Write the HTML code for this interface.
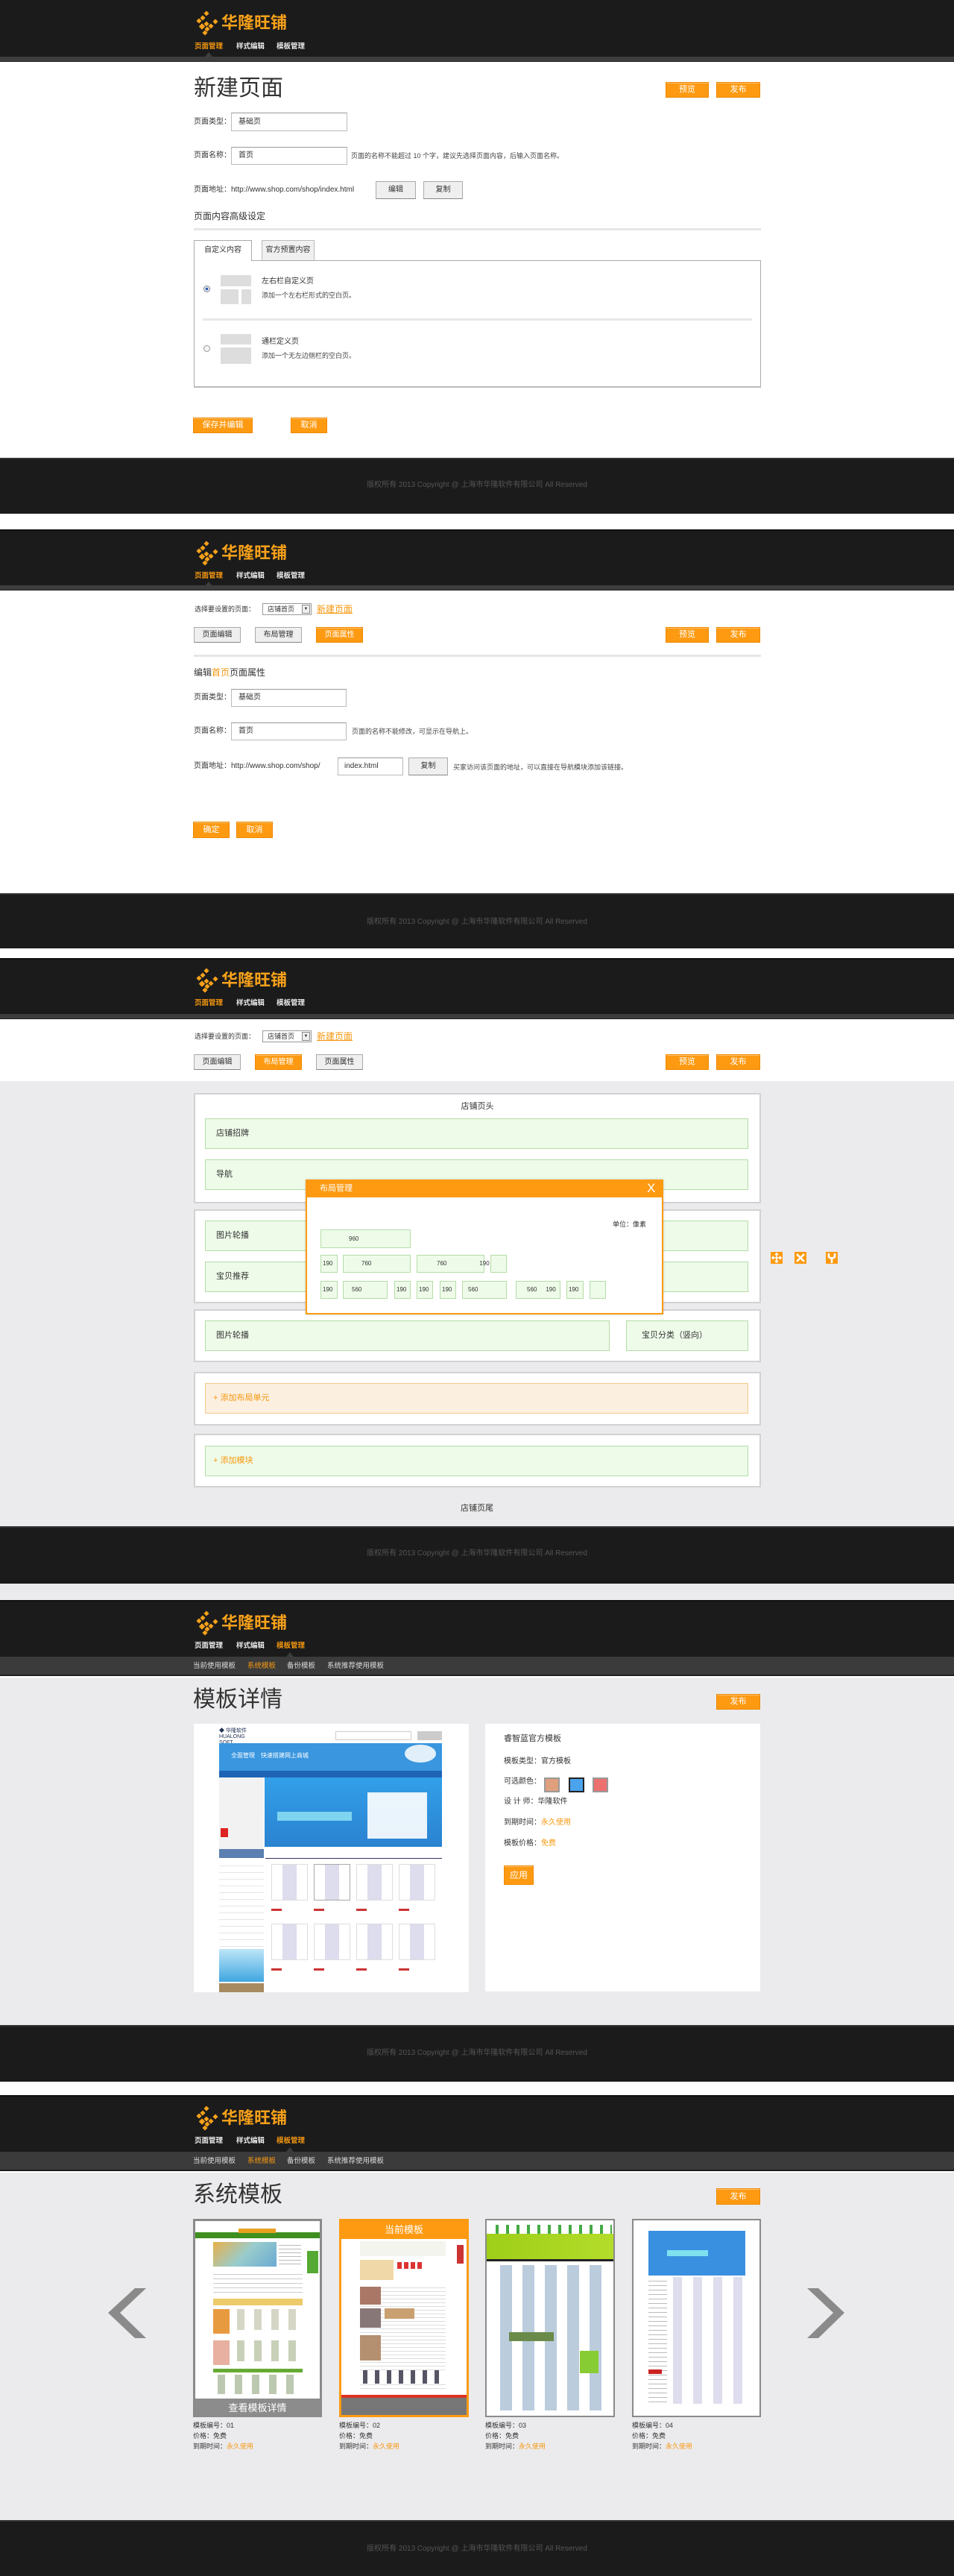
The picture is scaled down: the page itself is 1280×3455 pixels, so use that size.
<!DOCTYPE html>
<html><head><meta charset="utf-8">
<style>
*{margin:0;padding:0;box-sizing:border-box}
body{width:1280px;height:3455px;position:relative;background:#fff;font-family:"Liberation Sans","Noto Sans CJK SC",sans-serif;overflow:hidden;color:#333}
.a{position:absolute}
.hd{position:absolute;left:0;width:1280px;height:76px;background:#1b1b1b}
.band{position:absolute;left:0;width:1280px;height:7px;background:#3d3d3d;border-bottom:1px solid #222}
.sub{position:absolute;left:0;width:1280px;height:26px;background:#3b3b3b;border-bottom:2px solid #1e1e1e}
.ft{position:absolute;left:0;width:1280px;background:#1b1b1b;border-top:2px solid #333}
.cr{position:absolute;left:0;width:1280px;text-align:center;font-size:10px;color:#555;line-height:14px}
.lt{position:absolute;font-size:22px;line-height:24px;color:#f7a11a;font-weight:bold}
.nv{position:absolute;font-size:9.5px;line-height:14px;color:#eee;font-weight:bold;white-space:nowrap}
.sn{position:absolute;font-size:9.5px;line-height:14px;color:#ddd;white-space:nowrap}
.o{color:#f7980f!important}
.L{position:absolute;font-size:10px;line-height:14px;color:#333;white-space:nowrap}
.h{position:absolute;font-size:9px;line-height:14px;color:#444;white-space:nowrap}
.ob{position:absolute;background:#fd9a12;border:1px solid #f08800;color:#fff;font-size:11px;text-align:center;box-shadow:0 1px 0 #ffc070 inset}
.gb{position:absolute;background:#efefef;border:1px solid #aaa;border-bottom-color:#888;color:#333;font-size:10px;text-align:center}
.in{position:absolute;background:#fff;border:1px solid #bbb;border-top-color:#999;font-size:10px;color:#333;padding-left:9px}
.tri{position:absolute;width:0;height:0;border-left:5px solid transparent;border-right:5px solid transparent;border-bottom:6px solid #3d3d3d}
.gbox{position:absolute;background:#fff;border:2px solid #d2d2d2}
.gr{position:absolute;background:#eefbe9;border:1px solid #b5dca7;font-size:11px;color:#333;padding-left:14px}
.mb{position:absolute;background:#eefbe9;border:1px solid #b5dca7;font-size:8px;color:#333}
.gray{position:absolute;left:0;width:1280px;background:#ebebed}
.lg{position:absolute;width:40px;height:36px}
</style></head><body>
<svg width="0" height="0" style="position:absolute"><defs><symbol id="lg" viewBox="0 0 40 36"><g fill="#f7a11a"><rect x="16.5" y="3.5" width="5" height="5" transform="rotate(45 19 6)"/><rect x="11.5" y="9.5" width="5" height="5" transform="rotate(45 14 12)"/><rect x="6.5" y="13.5" width="5" height="5" transform="rotate(45 9 16)"/><rect x="10" y="20.5" width="6" height="6" transform="rotate(45 13 23.5)"/><rect x="16.5" y="17.5" width="5" height="5" transform="rotate(45 19 20)"/><rect x="22.5" y="20.5" width="5" height="5" transform="rotate(45 25 23)"/><rect x="28.5" y="14.5" width="5" height="5" transform="rotate(45 31 17)"/><rect x="17.5" y="24.5" width="5" height="5" transform="rotate(45 20 27)"/><rect x="14.5" y="29.5" width="5" height="5" transform="rotate(45 17 32)"/></g></symbol></defs></svg>

<!-- ===== Section 1 ===== -->
<div class="hd" style="top:0"></div><div class="band" style="top:76px"></div>
<svg class="lg" style="left:258px;top:12px"><use href="#lg"/></svg>
<div class="lt" style="left:297px;top:19px">华隆旺铺</div>
<div class="nv o" style="left:261px;top:56px">页面管理</div><div class="nv" style="left:317px;top:56px">样式编辑</div><div class="nv" style="left:371px;top:56px">模板管理</div>
<div class="tri" style="left:275px;top:70px"></div>

<div class="a" style="left:260px;top:103px;font-size:30px;line-height:32px;color:#333">新建页面</div>
<div class="ob" style="left:893px;top:110px;width:58px;height:21px;line-height:19px">预览</div>
<div class="ob" style="left:961px;top:110px;width:59px;height:21px;line-height:19px">发布</div>

<div class="L" style="left:260px;top:157px">页面类型：</div>
<div class="in" style="left:310px;top:151px;width:156px;height:25px;line-height:23px">基础页</div>
<div class="L" style="left:260px;top:202px">页面名称：</div>
<div class="in" style="left:310px;top:197px;width:156px;height:24px;line-height:22px">首页</div>
<div class="h" style="left:471px;top:202px">页面的名称不能超过 10 个字，建议先选择页面内容，后输入页面名称。</div>
<div class="L" style="left:260px;top:248px">页面地址：http://www.shop.com/shop/index.html</div>
<div class="gb" style="left:504px;top:243px;width:54px;height:24px;line-height:22px">编辑</div>
<div class="gb" style="left:568px;top:243px;width:53px;height:24px;line-height:22px">复制</div>
<div class="a" style="left:260px;top:283px;font-size:12px;line-height:14px">页面内容高级设定</div>
<div class="a" style="left:260px;top:306px;width:761px;height:3px;background:#e6e6e8"></div>
<div class="a" style="left:260px;top:349px;width:761px;height:171px;border:1px solid #aaa;border-bottom:2px solid #bbb"></div>
<div class="a" style="left:260px;top:322px;width:78px;height:28px;background:#fff;border:1px solid #aaa;border-bottom:none;font-size:10px;line-height:26px;text-align:center">自定义内容</div>
<div class="a" style="left:351px;top:322px;width:71px;height:27px;background:#f0f0f0;border:1px solid #bbb;border-bottom:none;font-size:10px;line-height:26px;text-align:center">官方预置内容</div>
<div class="a" style="left:273px;top:383px;width:9px;height:9px;border-radius:50%;border:1px solid #778;background:radial-gradient(#2a5db0 35%,#fff 45%)"></div>
<div class="a" style="left:296px;top:369px;width:41px;height:15px;background:#ddd"></div>
<div class="a" style="left:296px;top:388px;width:24px;height:20px;background:#ddd"></div>
<div class="a" style="left:324px;top:388px;width:13px;height:20px;background:#ddd"></div>
<div class="L" style="left:351px;top:371px">左右栏自定义页</div>
<div class="h" style="left:351px;top:389px">添加一个左右栏形式的空白页。</div>
<div class="a" style="left:272px;top:427px;width:737px;height:3px;background:#e8e8ea"></div>
<div class="a" style="left:273px;top:463px;width:9px;height:9px;border-radius:50%;border:1px solid #999;background:#f4f4f4"></div>
<div class="a" style="left:296px;top:448px;width:41px;height:14px;background:#ddd"></div>
<div class="a" style="left:296px;top:466px;width:41px;height:22px;background:#ddd"></div>
<div class="L" style="left:351px;top:452px">通栏定义页</div>
<div class="h" style="left:351px;top:470px">添加一个无左边侧栏的空白页。</div>
<div class="ob" style="left:259px;top:560px;width:80px;height:21px;line-height:19px">保存并编辑</div>
<div class="ob" style="left:390px;top:560px;width:49px;height:21px;line-height:19px">取消</div>

<div class="ft" style="top:614px;height:75px"></div>
<div class="cr" style="top:644px">版权所有 2013 Copyright @ 上海市华隆软件有限公司 All  Reserved</div>

<!-- ===== Section 2 ===== -->
<div class="hd" style="top:710px;border-top:2px solid #111"></div><div class="band" style="top:785px"></div>
<svg class="lg" style="left:258px;top:723px"><use href="#lg"/></svg>
<div class="lt" style="left:297px;top:730px">华隆旺铺</div>
<div class="nv o" style="left:261px;top:766px">页面管理</div><div class="nv" style="left:317px;top:766px">样式编辑</div><div class="nv" style="left:371px;top:766px">模板管理</div>
<div class="tri" style="left:275px;top:780px"></div>

<div class="h" style="left:261px;top:810px;color:#333">选择要设置的页面：</div>
<div class="a" style="left:352px;top:809px;width:66px;height:16px;border:1px solid #999;background:#fff;font-size:9px;line-height:14px;padding-left:6px">店铺首页<span style="position:absolute;right:1px;top:1px;width:11px;height:12px;border:1px solid #888;background:#eee;font-size:6px;line-height:10px;text-align:center">▼</span></div>
<div class="a o" style="left:425px;top:809px;font-size:12px;line-height:16px;text-decoration:underline">新建页面</div>
<div class="gb" style="left:260px;top:841px;width:63px;height:21px;line-height:19px">页面编辑</div>
<div class="gb" style="left:342px;top:841px;width:63px;height:21px;line-height:19px">布局管理</div>
<div class="ob" style="left:424px;top:841px;width:63px;height:21px;line-height:19px;font-size:10px">页面属性</div>
<div class="ob" style="left:893px;top:841px;width:58px;height:21px;line-height:19px">预览</div>
<div class="ob" style="left:961px;top:841px;width:59px;height:21px;line-height:19px">发布</div>
<div class="a" style="left:260px;top:878px;width:761px;height:3px;background:#e6e6e8"></div>
<div class="a" style="left:260px;top:895px;font-size:12px;line-height:14px">编辑<span class="o">首页</span>页面属性</div>
<div class="L" style="left:260px;top:929px">页面类型：</div>
<div class="in" style="left:310px;top:924px;width:155px;height:24px;line-height:22px">基础页</div>
<div class="L" style="left:260px;top:974px">页面名称：</div>
<div class="in" style="left:310px;top:969px;width:155px;height:24px;line-height:22px">首页</div>
<div class="h" style="left:472px;top:974px">页面的名称不能修改，可显示在导航上。</div>
<div class="L" style="left:260px;top:1021px">页面地址：http://www.shop.com/shop/</div>
<div class="in" style="left:453px;top:1016px;width:88px;height:24px;line-height:22px;padding-left:8px">index.html</div>
<div class="gb" style="left:548px;top:1016px;width:53px;height:24px;line-height:22px">复制</div>
<div class="h" style="left:608px;top:1022px">买家访问该页面的地址，可以直接在导航模块添加该链接。</div>
<div class="ob" style="left:259px;top:1102px;width:49px;height:22px;line-height:20px">确定</div>
<div class="ob" style="left:317px;top:1102px;width:49px;height:22px;line-height:20px">取消</div>

<div class="ft" style="top:1198px;height:74px"></div>
<div class="cr" style="top:1230px">版权所有 2013 Copyright @ 上海市华隆软件有限公司 All  Reserved</div>

<!-- ===== Section 3 ===== -->
<div class="hd" style="top:1285px;height:75px;border-top:2px solid #111"></div><div class="band" style="top:1360px"></div>
<svg class="lg" style="left:258px;top:1296px"><use href="#lg"/></svg>
<div class="lt" style="left:297px;top:1303px">华隆旺铺</div>
<div class="nv o" style="left:261px;top:1339px">页面管理</div><div class="nv" style="left:317px;top:1339px">样式编辑</div><div class="nv" style="left:371px;top:1339px">模板管理</div>

<div class="h" style="left:261px;top:1383px;color:#333">选择要设置的页面：</div>
<div class="a" style="left:352px;top:1382px;width:66px;height:16px;border:1px solid #999;background:#fff;font-size:9px;line-height:14px;padding-left:6px">店铺首页<span style="position:absolute;right:1px;top:1px;width:11px;height:12px;border:1px solid #888;background:#eee;font-size:6px;line-height:10px;text-align:center">▼</span></div>
<div class="a o" style="left:425px;top:1382px;font-size:12px;line-height:16px;text-decoration:underline">新建页面</div>
<div class="gb" style="left:260px;top:1414px;width:63px;height:21px;line-height:19px">页面编辑</div>
<div class="ob" style="left:342px;top:1414px;width:63px;height:21px;line-height:19px;font-size:10px">布局管理</div>
<div class="gb" style="left:424px;top:1414px;width:63px;height:21px;line-height:19px">页面属性</div>
<div class="ob" style="left:893px;top:1414px;width:58px;height:21px;line-height:19px">预览</div>
<div class="ob" style="left:961px;top:1414px;width:59px;height:21px;line-height:19px">发布</div>

<div class="gray" style="top:1450px;height:597px"></div>
<div class="gbox" style="left:260px;top:1466px;width:761px;height:148px"></div>
<div class="a" style="left:260px;top:1477px;width:761px;text-align:center;font-size:11px;line-height:14px">店铺页头</div>
<div class="gr" style="left:275px;top:1500px;width:729px;height:41px;line-height:39px">店铺招牌</div>
<div class="gr" style="left:275px;top:1555px;width:729px;height:41px;line-height:39px">导航</div>
<div class="gbox" style="left:260px;top:1622px;width:761px;height:126px"></div>
<div class="gr" style="left:275px;top:1637px;width:729px;height:41px;line-height:39px">图片轮播</div>
<div class="gr" style="left:275px;top:1692px;width:729px;height:41px;line-height:39px">宝贝推荐</div>
<div class="gbox" style="left:260px;top:1756px;width:761px;height:71px"></div>
<div class="gr" style="left:275px;top:1771px;width:543px;height:41px;line-height:39px">图片轮播</div>
<div class="gr" style="left:840px;top:1771px;width:164px;height:41px;line-height:39px;padding-left:20px">宝贝分类（竖向）</div>
<div class="gbox" style="left:260px;top:1840px;width:761px;height:72px"></div>
<div class="gr" style="left:275px;top:1855px;width:729px;height:41px;line-height:39px;background:#fbefdf;border-color:#f5c98a;color:#f7980f;padding-left:10px">+ 添加布局单元</div>
<div class="gbox" style="left:260px;top:1923px;width:761px;height:72px"></div>
<div class="gr" style="left:275px;top:1939px;width:729px;height:41px;line-height:39px;color:#f7980f;padding-left:10px">+ 添加模块</div>
<div class="a" style="left:560px;top:2016px;width:160px;text-align:center;font-size:11px;line-height:14px">店铺页尾</div>

<svg class="a" style="left:1034px;top:1679px" width="90" height="17" viewBox="0 0 90 17">
<rect x="0" y="0" width="16" height="16" fill="#fd9a12"/><path d="M8 2V14M2 8H14M6 4L8 2L10 4M6 12L8 14L10 12M4 6L2 8L4 10M12 6L14 8L12 10" stroke="#fff" stroke-width="1.6" fill="none"/>
<rect x="32" y="0" width="16" height="16" fill="#fd9a12"/><path d="M35 3L45 13M45 3L35 13" stroke="#fff" stroke-width="2.6"/>
<rect x="74" y="0" width="16" height="16" fill="#fd9a12"/><path d="M78 2V7Q82 10 86 7V2M82 8V15" stroke="#fff" stroke-width="2.6" fill="none"/>
</svg>

<!-- modal -->
<div class="a" style="left:410px;top:1582px;width:480px;height:181px;background:#fff;border:2px solid #fd9a12;box-shadow:0 0 3px rgba(0,0,0,.2)"></div>
<div class="a" style="left:410px;top:1582px;width:480px;height:24px;background:#fd9a12"></div>
<div class="a" style="left:429px;top:1587px;color:#fff;font-size:11px;line-height:14px">布局管理</div>
<div class="a" style="left:868px;top:1584px;color:#fff;font-size:17px;line-height:20px">X</div>
<div class="h" style="left:822px;top:1635px;color:#333">单位：像素</div>
<div class="mb" style="left:430px;top:1649px;width:121px;height:25px;line-height:23px;padding-left:37px">960</div>
<div class="mb" style="left:430px;top:1683px;width:23px;height:24px;line-height:22px;padding-left:2px">190</div>
<div class="mb" style="left:460px;top:1683px;width:91px;height:24px;line-height:22px;padding-left:24px">760</div>
<div class="mb" style="left:559px;top:1683px;width:91px;height:24px;line-height:22px;padding-left:26px">760<span style="margin-left:44px">190</span></div>
<div class="mb" style="left:658px;top:1683px;width:22px;height:24px"></div>
<div class="mb" style="left:430px;top:1718px;width:23px;height:24px;line-height:22px;padding-left:2px">190</div>
<div class="mb" style="left:460px;top:1718px;width:60px;height:24px;line-height:22px;padding-left:11px">560</div>
<div class="mb" style="left:529px;top:1718px;width:22px;height:24px;line-height:22px;padding-left:2px">190</div>
<div class="mb" style="left:559px;top:1718px;width:22px;height:24px;line-height:22px;padding-left:2px">190</div>
<div class="mb" style="left:590px;top:1718px;width:22px;height:24px;line-height:22px;padding-left:2px">190</div>
<div class="mb" style="left:620px;top:1718px;width:60px;height:24px;line-height:22px;padding-left:7px">560</div>
<div class="mb" style="left:692px;top:1718px;width:60px;height:24px;line-height:22px;padding-left:14px">560<span style="margin-left:12px">190</span></div>
<div class="mb" style="left:760px;top:1718px;width:23px;height:24px;line-height:22px;padding-left:2px">190</div>
<div class="mb" style="left:791px;top:1718px;width:22px;height:24px"></div>

<div class="ft" style="top:2047px;height:77px"></div>
<div class="cr" style="top:2077px">版权所有 2013 Copyright @ 上海市华隆软件有限公司 All  Reserved</div>
<div class="gray" style="top:2124px;height:22px"></div>

<!-- ===== Section 4 ===== -->
<div class="hd" style="top:2146px;border-top:2px solid #111"></div><div class="sub" style="top:2222px"></div>
<svg class="lg" style="left:258px;top:2158px"><use href="#lg"/></svg>
<div class="lt" style="left:297px;top:2165px">华隆旺铺</div>
<div class="nv" style="left:261px;top:2201px">页面管理</div><div class="nv" style="left:317px;top:2201px">样式编辑</div><div class="nv o" style="left:371px;top:2201px">模板管理</div>
<div class="tri" style="left:384px;top:2216px;border-bottom-color:#3b3b3b"></div>
<div class="sn" style="left:259px;top:2228px">当前使用模板</div><div class="sn o" style="left:332px;top:2228px">系统模板</div><div class="sn" style="left:385px;top:2228px">备份模板</div><div class="sn" style="left:439px;top:2228px">系统推荐使用模板</div>
<div class="gray" style="top:2250px;height:466px"></div>
<div class="a" style="left:259px;top:2264px;font-size:30px;line-height:32px">模板详情</div>
<div class="ob" style="left:961px;top:2272px;width:59px;height:21px;line-height:19px">发布</div>

<div class="a" style="left:260px;top:2312px;width:369px;height:360px;background:#fff;overflow:hidden">
 <div class="a" style="left:34px;top:6px;width:40px;height:16px;font-size:7px;color:#235;line-height:8px">◆ 华隆软件<br>HUALONG SOFT</div>
 <div class="a" style="left:190px;top:10px;width:102px;height:12px;border:1px solid #ccc"></div>
 <div class="a" style="left:300px;top:10px;width:33px;height:12px;background:#ccc"></div>
 <div class="a" style="left:34px;top:26px;width:299px;height:37px;background:#3996df"></div>
 <div class="a" style="left:50px;top:37px;color:#fff;font-size:8px">全面管理　快速搭建网上商城</div>
 <div class="a" style="left:283px;top:28px;width:42px;height:24px;border-radius:50%;background:#fff;opacity:.85"></div>
 <div class="a" style="left:34px;top:63px;width:299px;height:9px;background:#1f64b5"></div>
 <div class="a" style="left:34px;top:72px;width:60px;height:105px;background:#f2f2f2"></div>
 <div class="a" style="left:36px;top:140px;width:10px;height:12px;background:#d22"></div>
 <div class="a" style="left:95px;top:72px;width:238px;height:93px;background:linear-gradient(#33a0ea,#2a82d0)"></div>
 <div class="a" style="left:112px;top:118px;width:100px;height:12px;background:#7fd4f0"></div>
 <div class="a" style="left:233px;top:92px;width:80px;height:62px;background:#fff;opacity:.9"></div>
 <div class="a" style="left:34px;top:168px;width:60px;height:12px;background:#5b7fb0"></div>
 <div class="a" style="left:96px;top:180px;width:237px;height:1px;background:#336"></div>
 <div class="a" style="left:34px;top:182px;width:60px;height:120px;background:repeating-linear-gradient(#fff 0 8px,#e6e6e6 8px 9px)"></div>
 <div style="position:absolute;left:104px;top:188px;width:230px">
  <div class="a" style="left:0;top:0;width:49px;height:49px;border:1px solid #ddd;background:linear-gradient(90deg,#fff 30%,#dde 30% 70%,#fff 70%)"></div>
  <div class="a" style="left:57px;top:0;width:49px;height:49px;border:1px solid #aaa;background:linear-gradient(90deg,#fff 30%,#dde 30% 70%,#fff 70%)"></div>
  <div class="a" style="left:114px;top:0;width:49px;height:49px;border:1px solid #ddd;background:linear-gradient(90deg,#fff 30%,#dde 30% 70%,#fff 70%)"></div>
  <div class="a" style="left:171px;top:0;width:49px;height:49px;border:1px solid #ddd;background:linear-gradient(90deg,#fff 30%,#dde 30% 70%,#fff 70%)"></div>
  <div class="a" style="left:0;top:60px;width:220px;height:3px;background:repeating-linear-gradient(90deg,#c33 0 14px,#fff 14px 57px)"></div>
  <div class="a" style="left:0;top:80px;width:49px;height:49px;border:1px solid #ddd;background:linear-gradient(90deg,#fff 30%,#dde 30% 70%,#fff 70%)"></div>
  <div class="a" style="left:57px;top:80px;width:49px;height:49px;border:1px solid #ddd;background:linear-gradient(90deg,#fff 30%,#dde 30% 70%,#fff 70%)"></div>
  <div class="a" style="left:114px;top:80px;width:49px;height:49px;border:1px solid #ddd;background:linear-gradient(90deg,#fff 30%,#dde 30% 70%,#fff 70%)"></div>
  <div class="a" style="left:171px;top:80px;width:49px;height:49px;border:1px solid #ddd;background:linear-gradient(90deg,#fff 30%,#dde 30% 70%,#fff 70%)"></div>
  <div class="a" style="left:0;top:140px;width:220px;height:3px;background:repeating-linear-gradient(90deg,#c33 0 14px,#fff 14px 57px)"></div>
 </div>
 <div class="a" style="left:34px;top:302px;width:60px;height:44px;background:linear-gradient(#bfe6f8,#3fa6e0)"></div>
 <div class="a" style="left:34px;top:348px;width:60px;height:12px;background:#a88a60"></div>
</div>

<div class="a" style="left:651px;top:2312px;width:369px;height:359px;background:#fff"></div>
<div class="a" style="left:676px;top:2325px;font-size:11px;line-height:14px">睿智蓝官方模板</div>
<div class="L" style="left:676px;top:2356px">模板类型：官方模板</div>
<div class="L" style="left:676px;top:2383px">可选颜色：</div>
<div class="a" style="left:730px;top:2384px;width:21px;height:20px;background:#e0a07e;border:2px solid #999"></div>
<div class="a" style="left:763px;top:2384px;width:21px;height:20px;background:#4ba3ec;border:2px solid #222"></div>
<div class="a" style="left:795px;top:2384px;width:21px;height:20px;background:#ec7070;border:2px solid #999"></div>
<div class="L" style="left:676px;top:2410px">设 计 师：华隆软件</div>
<div class="L" style="left:676px;top:2438px">到期时间：<span class="o">永久使用</span></div>
<div class="L" style="left:676px;top:2466px">模板价格：<span class="o">免费</span></div>
<div class="ob" style="left:676px;top:2502px;width:40px;height:26px;line-height:24px;font-size:12px">应用</div>

<div class="ft" style="top:2716px;height:76px"></div>
<div class="cr" style="top:2747px">版权所有 2013 Copyright @ 上海市华隆软件有限公司 All  Reserved</div>

<!-- ===== Section 5 ===== -->
<div class="hd" style="top:2810px;border-top:2px solid #111"></div><div class="sub" style="top:2886px"></div>
<svg class="lg" style="left:258px;top:2822px"><use href="#lg"/></svg>
<div class="lt" style="left:297px;top:2829px">华隆旺铺</div>
<div class="nv" style="left:261px;top:2865px">页面管理</div><div class="nv" style="left:317px;top:2865px">样式编辑</div><div class="nv o" style="left:371px;top:2865px">模板管理</div>
<div class="tri" style="left:384px;top:2880px;border-bottom-color:#3b3b3b"></div>
<div class="sn" style="left:259px;top:2892px">当前使用模板</div><div class="sn o" style="left:332px;top:2892px">系统模板</div><div class="sn" style="left:385px;top:2892px">备份模板</div><div class="sn" style="left:439px;top:2892px">系统推荐使用模板</div>
<div class="gray" style="top:2914px;height:466px"></div>
<div class="a" style="left:259px;top:2928px;font-size:30px;line-height:32px">系统模板</div>
<div class="ob" style="left:961px;top:2935px;width:59px;height:22px;line-height:20px">发布</div>

<svg class="a" style="left:140px;top:3064px" width="1000" height="80" viewBox="140 3064 1000 80" fill="#8a8a8a">
<polygon points="181,3069 196,3069 161,3102 196,3136 181,3136 145,3102"/>
<polygon points="1083,3069 1098,3069 1133,3102 1098,3136 1083,3136 1118,3102"/>
</svg>

<!-- card 1 -->
<div class="a" style="left:259px;top:2976px;width:173px;height:266px;background:#fff;border:3px solid #8a8a8a;overflow:hidden">
 <div class="a" style="left:0;top:15px;width:167px;height:8px;background:#3f8f1e"></div>
 <div class="a" style="left:58px;top:10px;width:50px;height:6px;background:#e8a020"></div>
 <div class="a" style="left:24px;top:28px;width:85px;height:33px;background:linear-gradient(135deg,#e9b04a,#9cc,#6aa9d2)"></div>
 <div class="a" style="left:112px;top:28px;width:30px;height:33px;background:repeating-linear-gradient(#fff 0 4px,#bbb 4px 5px)"></div>
 <div class="a" style="left:150px;top:40px;width:15px;height:30px;background:#5a3"></div>
 <div class="a" style="left:24px;top:66px;width:120px;height:34px;background:repeating-linear-gradient(#fff 0 5px,#ccc 5px 6px)"></div>
 <div class="a" style="left:24px;top:104px;width:120px;height:9px;background:#eecb6a"></div>
 <div class="a" style="left:24px;top:118px;width:22px;height:33px;background:#e89a40"></div>
 <div class="a" style="left:50px;top:118px;width:94px;height:28px;background:repeating-linear-gradient(90deg,#fff 0 6px,#d6d6c6 6px 16px,#fff 16px 23px)"></div>
 <div class="a" style="left:24px;top:160px;width:22px;height:33px;background:#e8b0a0"></div>
 <div class="a" style="left:50px;top:160px;width:94px;height:28px;background:repeating-linear-gradient(90deg,#fff 0 6px,#c8d0b8 6px 16px,#fff 16px 23px)"></div>
 <div class="a" style="left:24px;top:198px;width:120px;height:5px;background:#6a3"></div>
 <div class="a" style="left:24px;top:206px;width:120px;height:26px;background:repeating-linear-gradient(90deg,#fff 0 6px,#bcc8b0 6px 16px,#fff 16px 23px)"></div>
 <div class="a" style="left:0;top:238px;width:167px;height:25px;background:#8c8c8c;color:#fff;font-size:13px;line-height:25px;text-align:center">查看模板详情</div>
</div>
<!-- card 2 -->
<div class="a" style="left:455px;top:2976px;width:174px;height:266px;background:#fff;border:3px solid #fd9a12;overflow:hidden">
 <div class="a" style="left:0;top:0;width:168px;height:24px;background:#fd9a12;color:#fff;font-size:13px;line-height:24px;text-align:center">当前模板</div>
 <div class="a" style="left:25px;top:27px;width:115px;height:20px;background:#f4f4ee"></div>
 <div class="a" style="left:155px;top:32px;width:9px;height:25px;background:#c33"></div>
 <div class="a" style="left:25px;top:52px;width:45px;height:27px;background:#f0d8a8"></div>
 <div class="a" style="left:75px;top:55px;width:35px;height:9px;background:repeating-linear-gradient(90deg,#d33 0 6px,#fff 6px 9px)"></div>
 <div class="a" style="left:25px;top:85px;width:115px;height:140px;background:repeating-linear-gradient(#fff 0 4px,#ddd 4px 5px)"></div>
 <div class="a" style="left:25px;top:88px;width:28px;height:24px;background:#a76"></div>
 <div class="a" style="left:25px;top:117px;width:28px;height:26px;background:#877"></div>
 <div class="a" style="left:58px;top:117px;width:40px;height:14px;background:#c9a070"></div>
 <div class="a" style="left:25px;top:153px;width:28px;height:34px;background:#b49070"></div>
 <div class="a" style="left:25px;top:200px;width:115px;height:18px;background:repeating-linear-gradient(90deg,#fff 0 4px,#556 4px 10px,#fff 10px 16px)"></div>
 <div class="a" style="left:0;top:233px;width:168px;height:4px;background:#d32"></div>
 <div class="a" style="left:0;top:237px;width:168px;height:26px;background:#777"></div>
</div>
<!-- card 3 -->
<div class="a" style="left:651px;top:2976px;width:174px;height:266px;background:#fff;border:2px solid #8a8a8a;overflow:hidden">
 <div class="a" style="left:2px;top:6px;width:166px;height:12px;background:repeating-linear-gradient(90deg,#fff 0 10px,#4a4 10px 14px)"></div>
 <div class="a" style="left:0;top:18px;width:170px;height:34px;background:linear-gradient(90deg,#9fcf18,#b3dc2a)"></div>
 <div class="a" style="left:0;top:52px;width:170px;height:3px;background:#222"></div>
 <div class="a" style="left:10px;top:60px;width:150px;height:195px;background:repeating-linear-gradient(90deg,#fff 0 8px,#bcd 8px 24px,#fff 24px 30px)"></div>
 <div class="a" style="left:30px;top:150px;width:60px;height:12px;background:#6a8a4a"></div>
 <div class="a" style="left:125px;top:175px;width:25px;height:30px;background:#8c3"></div>
</div>
<!-- card 4 -->
<div class="a" style="left:848px;top:2976px;width:173px;height:266px;background:#fff;border:2px solid #8a8a8a;overflow:hidden">
 <div class="a" style="left:20px;top:14px;width:130px;height:60px;background:#3a90e0"></div>
 <div class="a" style="left:45px;top:40px;width:55px;height:8px;background:#7fe0f0"></div>
 <div class="a" style="left:20px;top:76px;width:130px;height:170px;background:repeating-linear-gradient(90deg,#fff 0 6px,#dde 6px 18px,#fff 18px 27px)"></div>
 <div class="a" style="left:20px;top:76px;width:25px;height:170px;background:repeating-linear-gradient(#fff 0 5px,#bbb 5px 6px)"></div>
 <div class="a" style="left:20px;top:200px;width:18px;height:6px;background:#c22"></div>
</div>

<div class="h" style="left:259px;top:3246px;color:#333">模板编号：01</div>
<div class="h" style="left:259px;top:3260px;color:#333">价格：免费</div>
<div class="h" style="left:259px;top:3274px;color:#333">到期时间：<span class="o">永久使用</span></div>
<div class="h" style="left:455px;top:3246px;color:#333">模板编号：02</div>
<div class="h" style="left:455px;top:3260px;color:#333">价格：免费</div>
<div class="h" style="left:455px;top:3274px;color:#333">到期时间：<span class="o">永久使用</span></div>
<div class="h" style="left:651px;top:3246px;color:#333">模板编号：03</div>
<div class="h" style="left:651px;top:3260px;color:#333">价格：免费</div>
<div class="h" style="left:651px;top:3274px;color:#333">到期时间：<span class="o">永久使用</span></div>
<div class="h" style="left:848px;top:3246px;color:#333">模板编号：04</div>
<div class="h" style="left:848px;top:3260px;color:#333">价格：免费</div>
<div class="h" style="left:848px;top:3274px;color:#333">到期时间：<span class="o">永久使用</span></div>

<div class="ft" style="top:3380px;height:75px"></div>
<div class="cr" style="top:3412px">版权所有 2013 Copyright @ 上海市华隆软件有限公司 All  Reserved</div>
</body></html>
